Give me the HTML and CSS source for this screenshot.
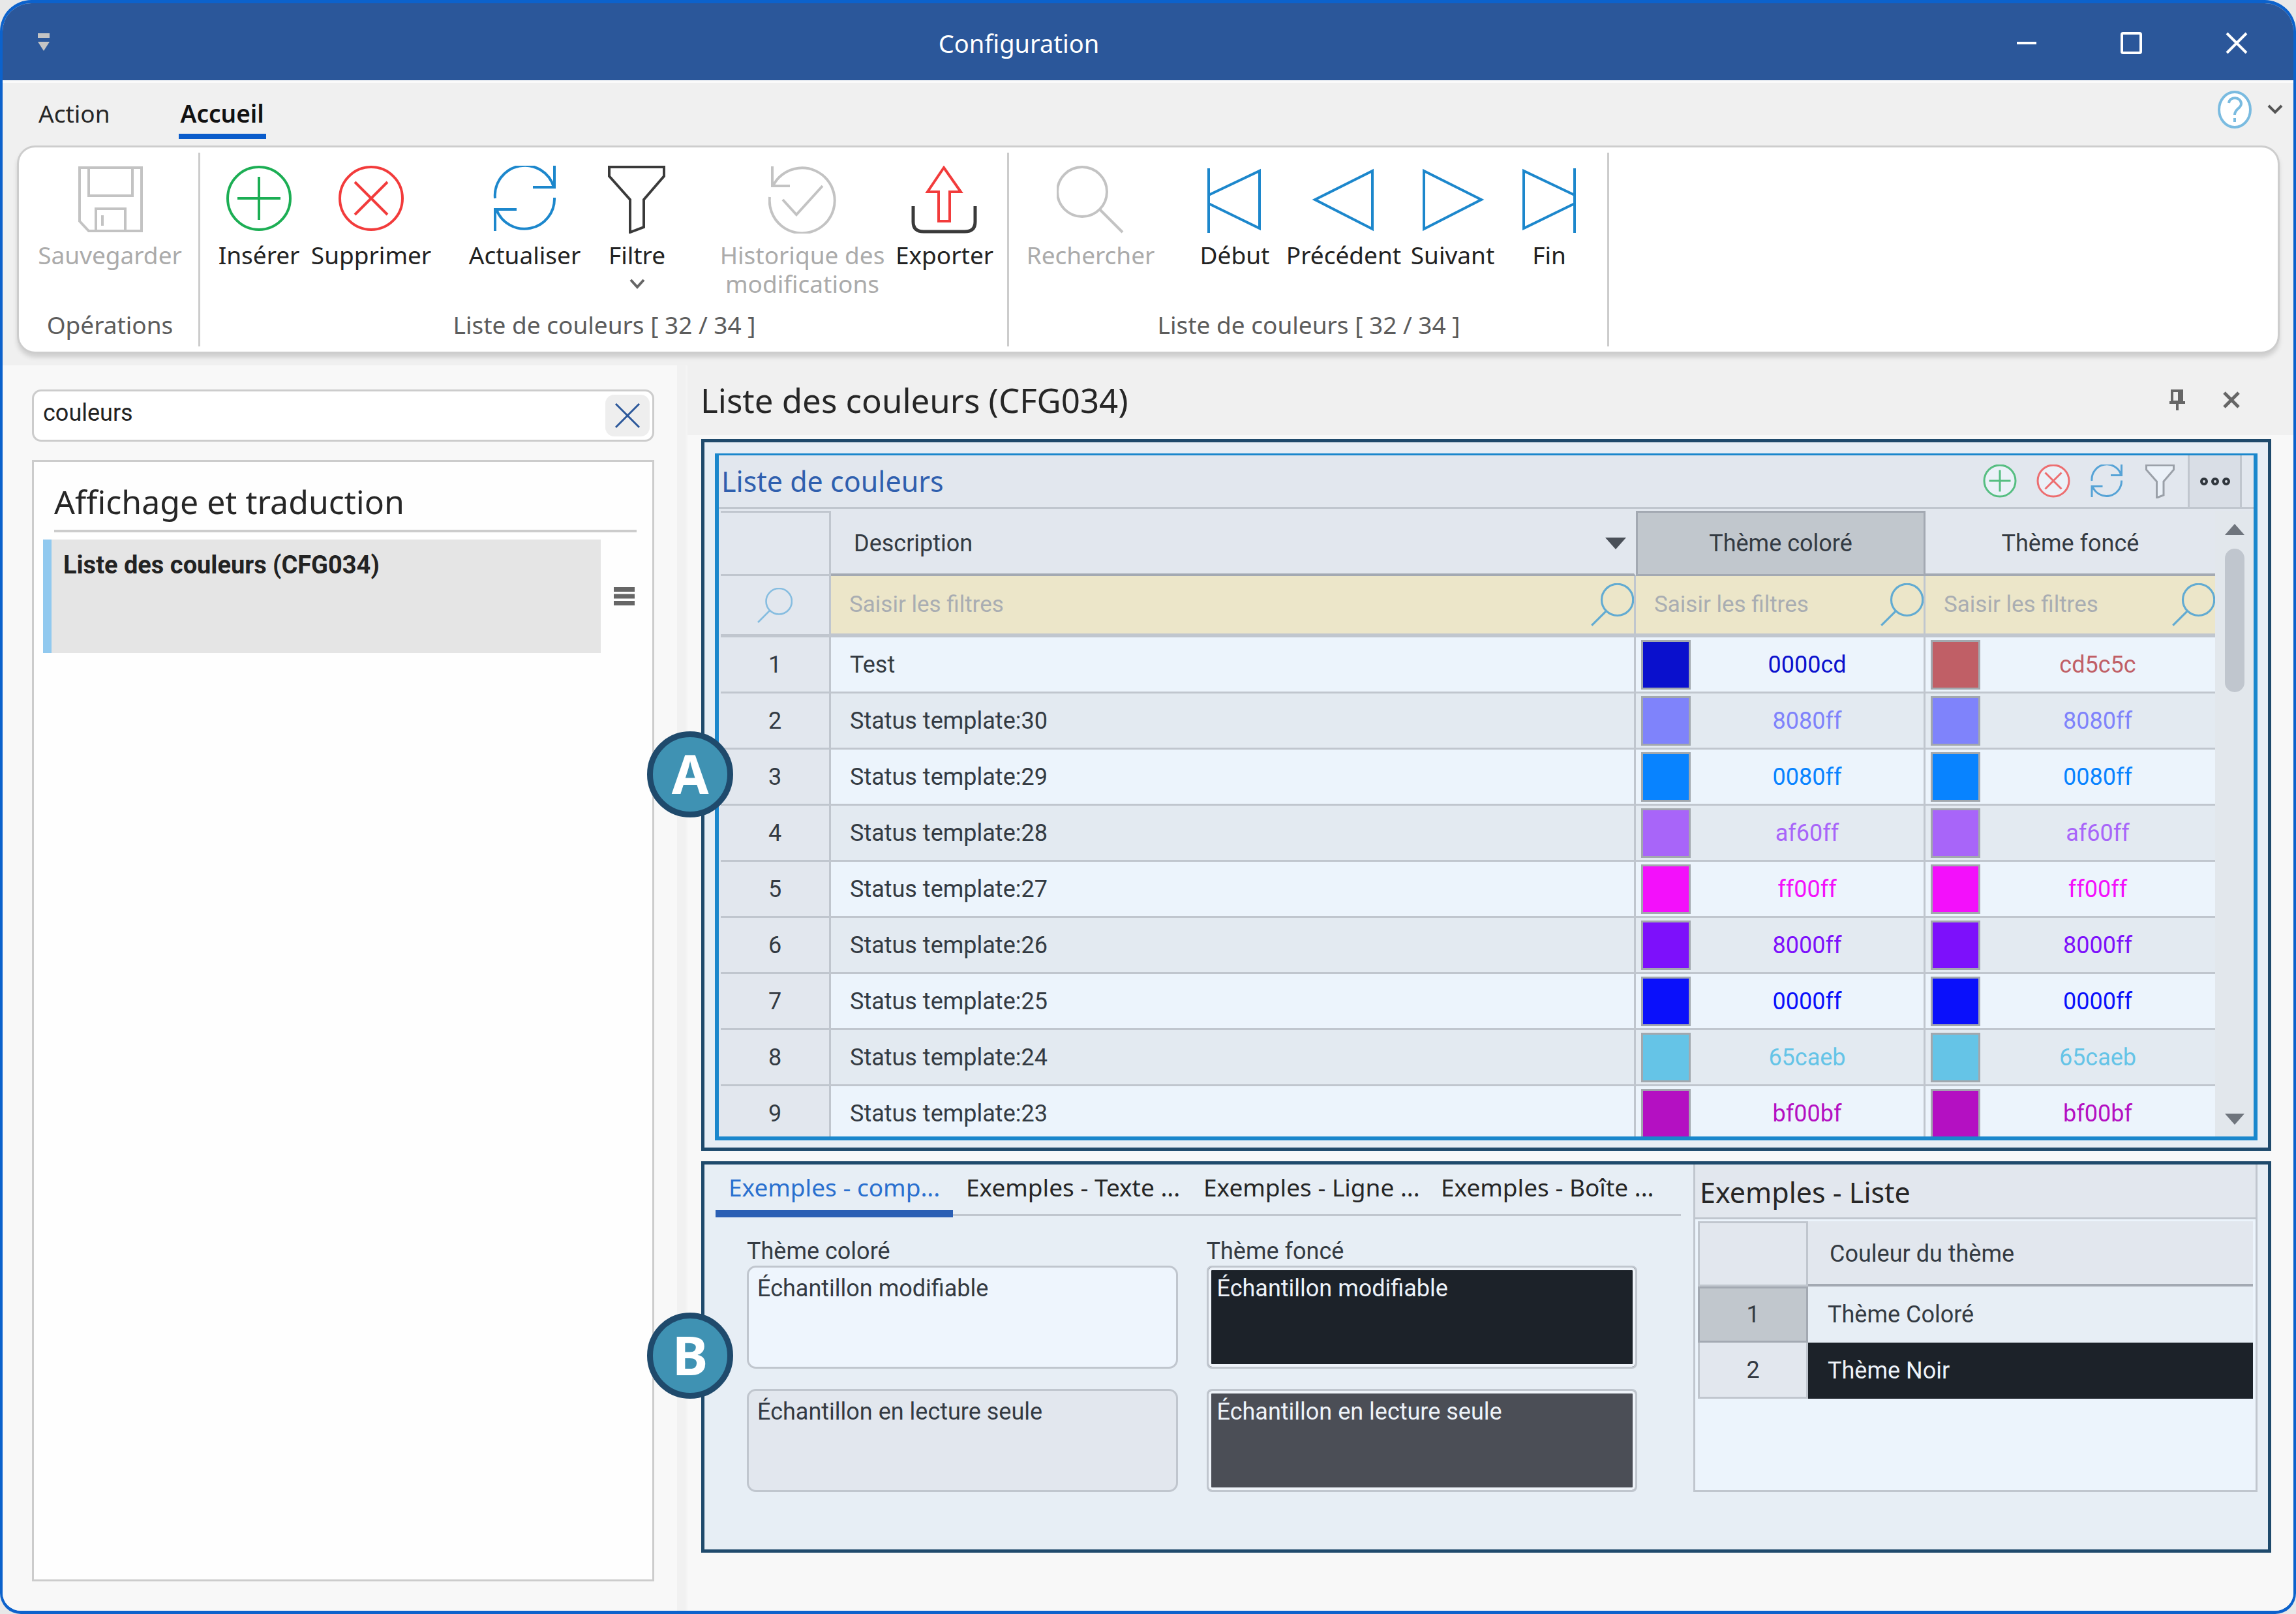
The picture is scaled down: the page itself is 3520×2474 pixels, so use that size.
FILE: index.html
```html
<!DOCTYPE html>
<html lang="fr">
<head>
<meta charset="utf-8">
<title>Configuration</title>
<link rel="stylesheet" href="styles.css">
</head>
<body>
<svg class="sprite" aria-hidden="true">
  <symbol id="save" viewBox="0 0 104 104"><path d="M5 3H100V100H19L5 85Z M19 3V46H86V3 M30 100V66H75V100 M40 76V92"/></symbol>
  <symbol id="plus" viewBox="0 0 104 104"><circle cx="52" cy="50" r="48"/><path d="M19 50H85 M52 17V83"/></symbol>
  <symbol id="cross" viewBox="0 0 104 104"><circle cx="52" cy="50" r="48"/><path d="M27 25L77 75 M77 25L27 75"/></symbol>
  <symbol id="refresh" viewBox="0 0 104 104"><path fill="none" d="M6 50A46 46 0 0 1 96 33 M97 0V33H64 M97 49A46 46 0 0 1 8 67 M6 100V67H39"/></symbol>
  <symbol id="filter" viewBox="0 0 104 104"><path d="M9 2H93V16L62 52V94L41 102V52L9 16Z"/></symbol>
  <symbol id="history" viewBox="0 0 104 104"><path d="M2 48A50 50 0 1 0 7 31 M6 1V31H33 M22 52L43 75L83 31"/></symbol>
  <symbol id="search" viewBox="0 0 104 104"><circle cx="39" cy="40" r="38"/><path d="M66 67L101 102"/></symbol>
  <symbol id="search-left" viewBox="0 0 104 104"><circle cx="64" cy="40" r="38"/><path d="M37 67L2 102"/></symbol>
  <symbol id="first" viewBox="0 0 104 104"><path d="M12 4V103 M12 45L90 8V96L12 58"/></symbol>
  <symbol id="prev" viewBox="0 0 104 104"><path d="M8 52L96 8V97Z"/></symbol>
  <symbol id="next" viewBox="0 0 104 104"><path d="M96 52L8 8V97Z"/></symbol>
  <symbol id="last" viewBox="0 0 104 104"><path d="M91 4V103 M91 45L13 8V96L91 58"/></symbol>
</svg>

<div class="window">
  <header class="titlebar">
    <button class="quick" aria-label="Barre d’accès rapide"><svg width="18" height="27" viewBox="0 0 18 27"><path d="M0 0H18V7H0Z M0 13H18L9 27Z"/></svg></button>
    <h1 class="title">Configuration</h1>
    <button class="winbtn" aria-label="Réduire"><svg width="34" height="34" viewBox="0 0 34 34"><path d="M2 17H32"/></svg></button>
    <button class="winbtn" aria-label="Agrandir"><svg width="34" height="34" viewBox="0 0 34 34"><rect x="2" y="2" width="29" height="30" rx="2"/></svg></button>
    <button class="winbtn" aria-label="Fermer"><svg width="34" height="34" viewBox="0 0 34 34"><path d="M2 2L32 32M32 2L2 32"/></svg></button>
  </header>

  <nav class="menu">
    <button class="menu-item">Action</button>
    <button class="menu-item active">Accueil</button>
    <div class="menu-right">
      <button class="help" aria-label="Aide"><svg width="52" height="58" viewBox="0 0 52 58"><ellipse cx="26" cy="29" rx="24" ry="27"/><path d="M17 19C18 8 36 9 36 20C36 27 26 28 26 37M26 42V48"/></svg></button>
      <button class="collapse" aria-label="Réduire le ruban"><svg width="24" height="16" viewBox="0 0 24 16"><path d="M2 2L12 12L22 2"/></svg></button>
    </div>
  </nav>

  <section class="ribbon">
    <div class="group g-ops">
      <div class="tools"><button class="tool disabled" disabled><svg class="ico"><use href="#save"/></svg>Sauvegarder</button></div>
      <div class="caption">Opérations</div>
    </div>
    <div class="group g-edit">
      <div class="tools">
        <div class="cluster">
          <button class="tool w-ins"><svg class="ico green"><use href="#plus"/></svg>Insérer</button>
          <button class="tool w-sup"><svg class="ico red"><use href="#cross"/></svg>Supprimer</button>
        </div>
        <div class="cluster">
          <button class="tool w-sup"><svg class="ico blue"><use href="#refresh"/></svg>Actualiser</button>
          <button class="tool w-ins"><svg class="ico dark"><use href="#filter"/></svg>Filtre<svg class="drop" viewBox="0 0 24 16"><path d="M2 2L12 13L22 2"/></svg></button>
        </div>
        <div class="cluster">
          <button class="tool w-his disabled" disabled><svg class="ico mid"><use href="#history"/></svg>Historique des<br>modifications</button>
          <button class="tool w-exp"><svg class="ico" viewBox="0 0 104 104"><path class="red" d="M51 3L77 40H60V85H43V40H26Z"/><path class="tray" d="M4 62V86Q4 101 20 101H83Q99 101 99 86V62"/></svg>Exporter</button>
        </div>
      </div>
      <div class="caption">Liste de couleurs [ 32 / 34 ]</div>
    </div>
    <div class="group g-nav">
      <div class="tools">
        <div class="cluster">
          <button class="tool w-rec disabled" disabled><svg class="ico"><use href="#search"/></svg>Rechercher</button>
        </div>
        <div class="cluster">
          <button class="tool w-deb"><svg class="ico blue"><use href="#first"/></svg>Début</button>
          <button class="tool w-pre"><svg class="ico blue"><use href="#prev"/></svg>Précédent</button>
          <button class="tool w-deb"><svg class="ico blue"><use href="#next"/></svg>Suivant</button>
          <button class="tool w-ins"><svg class="ico blue"><use href="#last"/></svg>Fin</button>
        </div>
      </div>
      <div class="caption">Liste de couleurs [ 32 / 34 ]</div>
    </div>
  </section>

  <main class="body">
    <aside class="sidebar">
      <div class="search">
        <input type="text" value="couleurs" aria-label="Rechercher">
        <button class="clear" aria-label="Effacer"><svg width="40" height="40" viewBox="0 0 40 40"><path d="M2 2L38 38M38 2L2 38"/></svg></button>
      </div>
      <div class="results">
        <h2 class="results-title">Affichage et traduction</h2>
        <div class="result">
          <a class="result-link" href="#liste">Liste des couleurs (CFG034)</a>
          <button class="handle" aria-label="Options"><svg width="32" height="28" viewBox="0 0 32 28"><path d="M0 0H32V7H0Z M0 10.500H32V17.500H0Z M0 21H32V28H0Z"/></svg></button>
        </div>
      </div>
    </aside>
    <div class="splitter"></div>
    <section class="content" id="liste">
      <header class="content-head">
        <h2 class="content-title">Liste des couleurs (CFG034)</h2>
        <button class="pin" aria-label="Épingler"><svg width="26" height="32" viewBox="0 0 26 32"><path d="M5 2H20V19H5Z M16 2V19 M1 20H25 M13 20V32"/></svg></button>
        <button class="pin" aria-label="Fermer l’onglet"><svg width="26" height="26" viewBox="0 0 26 26"><path class="thick" d="M2 2L24 24M24 2L2 24"/></svg></button>
      </header>

      <div class="panels">
        <section class="frame frame-main">
          <span class="badge badge-a">A</span>
          <div class="grid">
            <div class="grid-head">
              <h3 class="grid-title">Liste de couleurs</h3>
              <button class="mini" aria-label="Insérer"><svg class="green"><use href="#plus"/></svg></button>
              <button class="mini" aria-label="Supprimer"><svg class="red"><use href="#cross"/></svg></button>
              <button class="mini" aria-label="Actualiser"><svg class="blue"><use href="#refresh"/></svg></button>
              <button class="mini" aria-label="Filtre"><svg class="gray"><use href="#filter"/></svg></button>
              <button class="more" aria-label="Plus"><svg width="48" height="14" viewBox="0 0 48 14"><circle cx="7" cy="7" r="4"/><circle cx="24" cy="7" r="4"/><circle cx="41" cy="7" r="4"/></svg></button>
            </div>
            <div class="grid-body">
              <div class="table-wrap">
                <table class="table">
                  <colgroup><col class="c-num"><col><col class="c-color"><col class="c-color"></colgroup>
                  <thead>
                    <tr class="heads">
                      <td class="corner"></td>
                      <th scope="col" class="h-desc"><div class="sortable">Description<svg width="32" height="18" viewBox="0 0 32 18"><path d="M0 0H32L16 18Z"/></svg></div></th>
                      <th scope="col" class="selected">Thème coloré</th>
                      <th scope="col">Thème foncé</th>
                    </tr>
                    <tr class="filters">
                      <td class="num"><svg class="find small"><use href="#search-left"/></svg></td>
                      <td><div class="filter"><input type="text" placeholder="Saisir les filtres" aria-label="Filtrer la description"><svg class="find"><use href="#search-left"/></svg></div></td>
                      <td><div class="filter"><input type="text" placeholder="Saisir les filtres" aria-label="Filtrer le thème coloré"><svg class="find"><use href="#search-left"/></svg></div></td>
                      <td><div class="filter"><input type="text" placeholder="Saisir les filtres" aria-label="Filtrer le thème foncé"><svg class="find"><use href="#search-left"/></svg></div></td>
                    </tr>
                  </thead>
                  <tbody>
                    <tr><th scope="row">1</th><td class="desc">Test</td><td><div class="color" style="color:#0a10cd"><i></i><span>0000cd</span></div></td><td><div class="color" style="color:#c05f66"><i></i><span>cd5c5c</span></div></td></tr>
                    <tr><th scope="row">2</th><td class="desc">Status template:30</td><td><div class="color" style="color:#7f83fb"><i></i><span>8080ff</span></div></td><td><div class="color" style="color:#7f83fb"><i></i><span>8080ff</span></div></td></tr>
                    <tr><th scope="row">3</th><td class="desc">Status template:29</td><td><div class="color" style="color:#0883ff"><i></i><span>0080ff</span></div></td><td><div class="color" style="color:#0883ff"><i></i><span>0080ff</span></div></td></tr>
                    <tr><th scope="row">4</th><td class="desc">Status template:28</td><td><div class="color" style="color:#a865f9"><i></i><span>af60ff</span></div></td><td><div class="color" style="color:#a865f9"><i></i><span>af60ff</span></div></td></tr>
                    <tr><th scope="row">5</th><td class="desc">Status template:27</td><td><div class="color" style="color:#f310fb"><i></i><span>ff00ff</span></div></td><td><div class="color" style="color:#f310fb"><i></i><span>ff00ff</span></div></td></tr>
                    <tr><th scope="row">6</th><td class="desc">Status template:26</td><td><div class="color" style="color:#7d10fb"><i></i><span>8000ff</span></div></td><td><div class="color" style="color:#7d10fb"><i></i><span>8000ff</span></div></td></tr>
                    <tr><th scope="row">7</th><td class="desc">Status template:25</td><td><div class="color" style="color:#0a10fb"><i></i><span>0000ff</span></div></td><td><div class="color" style="color:#0a10fb"><i></i><span>0000ff</span></div></td></tr>
                    <tr><th scope="row">8</th><td class="desc">Status template:24</td><td><div class="color" style="color:#65c4e7"><i></i><span>65caeb</span></div></td><td><div class="color" style="color:#65c4e7"><i></i><span>65caeb</span></div></td></tr>
                    <tr><th scope="row">9</th><td class="desc">Status template:23</td><td><div class="color" style="color:#b410c2"><i></i><span>bf00bf</span></div></td><td><div class="color" style="color:#b410c2"><i></i><span>bf00bf</span></div></td></tr>
                  </tbody>
                </table>
              </div>
              <div class="scrollbar">
                <svg width="30" height="17" viewBox="0 0 30 17"><path d="M0 17H30L15 0Z"/></svg>
                <div class="thumb"></div>
                <svg width="30" height="17" viewBox="0 0 30 17"><path d="M0 0H30L15 17Z"/></svg>
              </div>
            </div>
          </div>
        </section>

        <section class="frame frame-samples">
          <span class="badge badge-b">B</span>
          <div class="samples">
            <div class="tabs" role="tablist">
              <button class="tab active" role="tab" aria-selected="true">Exemples - comp...</button>
              <button class="tab" role="tab">Exemples - Texte ...</button>
              <button class="tab" role="tab">Exemples - Ligne ...</button>
              <button class="tab" role="tab">Exemples - Boîte ...</button>
            </div>
            <div class="fields">
              <div class="field">
                <label for="s1">Thème coloré</label>
                <textarea id="s1" class="sample">Échantillon modifiable</textarea>
                <textarea class="sample locked" readonly aria-label="Thème coloré, lecture seule">Échantillon en lecture seule</textarea>
              </div>
              <div class="field">
                <label for="s2">Thème foncé</label>
                <textarea id="s2" class="sample black">Échantillon modifiable</textarea>
                <textarea class="sample slate" readonly aria-label="Thème foncé, lecture seule">Échantillon en lecture seule</textarea>
              </div>
            </div>
          </div>
          <div class="list">
            <h3 class="list-title">Exemples - Liste</h3>
            <table class="table list-table">
              <colgroup><col class="c-num"><col></colgroup>
              <thead><tr class="heads"><td class="corner"></td><th scope="col" class="h-theme">Couleur du thème</th></tr></thead>
              <tbody>
                <tr><th scope="row" class="selected">1</th><td class="theme">Thème Coloré</td></tr>
                <tr><th scope="row">2</th><td class="theme black">Thème Noir</td></tr>
              </tbody>
            </table>
          </div>
        </section>
      </div>
    </section>
  </main>
</div>
</body>
</html>
```
FILE: styles.css
```css
:root {
  --line: #c0c6ce;
  --panel: #e2e7ee;
  --ui: "Noto Sans", "Open Sans", sans-serif;
  --data: Roboto, "Liberation Sans", sans-serif;
}
* { box-sizing: border-box; }
html, body { height: 100%; }
body { margin: 0; background: #e8e8e8; font: 37px/44px var(--ui); color: #262626; }
h1, h2, h3 { margin: 0; font-weight: 400; }
button { margin: 0; padding: 0; border: 0; background: none; font: inherit; color: inherit; }
svg { display: block; fill: none; stroke: currentColor; stroke-width: 4; }
.sprite { position: absolute; width: 0; height: 0; }
.green { color: #1cae54; }
.red { color: #f23b3b; stroke: #f23b3b; }
.blue { color: #1c87cc; }
.dark, .tray { color: #3a3a3a; stroke: #3a3a3a; }
.tray { stroke-width: 5; }
.mid { color: #b0b0b0; }

.window { height: 100%; display: flex; flex-direction: column; border: 4px solid #0c62cc; border-width: 5px 4px; border-radius: 48px 48px 32px 32px; background: #f0f0f0; overflow: hidden; }

.titlebar { display: flex; align-items: center; height: 118px; flex: none; padding-top: 4px; background: #2b579a; color: #fff; }
.quick { width: 94px; padding: 0 0 4px 32px; display: flex; justify-content: center; color: #c4c4c4; }
.quick svg { fill: currentColor; stroke: none; }
.title { flex: 1; text-align: center; font-size: 38px; }
.winbtn { width: 161px; height: 100%; display: grid; place-items: center; }
.winbtn:last-child { margin-right: 7px; }

.menu { display: flex; height: 100px; flex: none; padding-left: 52px; border-top: 4px solid #fafafa; }
.menu-item { margin-top: 20px; height: 66px; padding: 0 3px 4px; border-bottom: 8px solid transparent; }
.menu-item + .menu-item { margin-left: 102px; }
.menu-item.active { font-weight: 600; color: #111; border-bottom-color: #0a5ccb; }
.menu-right { margin-left: auto; display: flex; align-items: center; gap: 24px; padding: 0 16px 14px 0; }
.help { color: #7abbe0; }
.help ellipse { fill: #fff; }
.collapse { color: #555; }

.ribbon { display: flex; flex: none; height: 319px; margin: 0 21px 18px 22px; border: 3px solid #cdcdcd; border-radius: 28px; background: #fff; box-shadow: 0 6px 6px #d0d0d0; }
.group { display: flex; flex-direction: column; justify-content: space-between; margin: 8px 0; padding: 20px 0 11px; border-right: 3px solid #cccccc; }
.g-ops { width: 278px; padding-left: 4px; }
.g-edit { width: 1240px; padding-left: 14px; padding-right: 12px; }
.g-nav { width: 920px; padding-left: 15px; padding-right: 13px; }
.tools, .cluster { display: flex; justify-content: space-between; align-items: flex-start; }
.g-ops .tools { justify-content: center; }
.tool { display: flex; flex-direction: column; align-items: center; color: #222; white-space: nowrap; text-align: center; }
.tool.disabled { color: #ababab; }
.ico { width: 104px; height: 104px; margin-bottom: 11px; }
.disabled .ico { color: #c3c3c3; }
.drop { width: 24px; height: 16px; margin-top: 14px; color: #666; }
.w-ins { width: 152px; }
.w-sup { width: 192px; }
.w-his { width: 268px; }
.w-exp { width: 168px; }
.w-rec { width: 220px; }
.w-deb { width: 144px; }
.w-pre { width: 190px; }
.caption { text-align: center; color: #5c5c5c; }

.body { flex: 1; min-height: 0; display: grid; grid-template-columns: 1034px 16px minmax(0, 1fr); background: #f8f8f8; }
.sidebar { display: flex; flex-direction: column; padding: 37px 35px 45px 45px; }
.search { display: flex; align-items: center; height: 80px; padding-right: 4px; margin-bottom: 28px; border: 3px solid #cccccc; border-radius: 14px; background: #fff; }
.search input { flex: 1; min-width: 0; height: 60px; margin-bottom: 8px; padding: 0 14px; border: 0; background: none; font: 36px/44px var(--data); color: #222; outline: 0; }
.clear { width: 68px; height: 64px; display: grid; place-items: center; border-radius: 14px; background: #eeeeee; color: #2b579a; }
.clear svg { stroke-width: 3; }
.results { flex: 1; border: 3px solid #cccccc; background: #fefefe; }
.results-title { margin: 27px 24px 11px 31px; padding-bottom: 9px; border-bottom: 4px solid #cccccc; font-size: 50px; line-height: 68px; }
.result { display: flex; align-items: stretch; height: 174px; padding-left: 14px; }
.result-link { flex: 1; padding: 17px 18px; background: #e5e5e5; border-left: 13px solid #91c9ef; font: 700 38px/44px var(--data); color: #222; text-decoration: none; }
.handle { width: 72px; margin-right: 7px; display: grid; place-items: center; color: #666; }
.handle svg { fill: currentColor; stroke: none; }
.splitter { background: #f1f1f1; border-right: 3px solid #f4f4f4; }

.content { display: flex; flex-direction: column; min-height: 0; }
.content-head { flex: none; display: flex; align-items: center; height: 107px; padding: 0 82px 2px 20px; background: #f0f0f0; }
.content-title { flex: 1; font-size: 51px; line-height: 68px; }
.pin { width: 26px; margin-left: 57px; display: grid; place-items: center; color: #666; }
.thick { stroke-width: 5; }

.panels { flex: 1; min-height: 0; display: flex; flex-direction: column; gap: 16px; padding: 6px 34px 89px 21px; }
.frame { position: relative; border: 5px solid #1f4a6c; background: #e7eef5; }
.frame-main { flex: 1; min-height: 0; display: flex; padding: 17px 16px 11px 16px; }
.badge { position: absolute; left: -88px; width: 132px; height: 132px; display: grid; place-items: center; padding-bottom: 4px; border: 9px solid #1f4a6c; border-radius: 50%; background: #3f92b3; color: #fff; font-size: 82px; font-weight: 700; }
.badge-a { top: 443px; }
.badge-b { top: 227px; }

.grid { flex: 1; min-width: 0; display: flex; flex-direction: column; border: 6px solid #1a87cc; border-top-width: 3px; background: var(--panel); }
.grid-head { flex: none; display: flex; align-items: center; height: 82px; padding: 0 18px 0 4px; border-bottom: 3px solid var(--line); }
.grid-title { flex: 1; font-size: 43px; color: #2f5fae; }
.mini { width: 52px; height: 52px; margin-right: 30px; opacity: .7; }
.mini svg { width: 52px; height: 52px; fill: #eff6fd; stroke-width: 6; }
.gray { color: #7d838b; }
.more { width: 83px; height: 79px; margin-left: -14px; display: grid; place-items: center; border: solid var(--line); border-width: 0 3px; background: #d9dee6; color: #30363d; }
.grid-body { flex: 1; min-height: 0; display: flex; padding: 3px 0 0 3px; }
.table-wrap { flex: 1; min-width: 0; overflow: hidden; }

.table { width: 100%; table-layout: fixed; border-collapse: separate; border-spacing: 0; font: 36px/44px var(--data); color: #333a42; }
.table th, .table td { height: 86px; padding: 0; font-weight: 400; border: solid var(--line); border-width: 0 3px 3px 0; }
.table tr > :last-child { border-right: 0; }
.c-num { width: 169px; }
.c-color { width: 444px; }
.table tbody tr { background: #ecf4fc; }
.table tbody tr:nth-child(even) { background: #e3eaf1; }
.table tbody th, .table .corner, .table .num { background: var(--panel); }
.table .heads > * { height: 100px; border-top: 3px solid var(--line); }
.table .heads th { border-top-color: var(--panel); border-right-color: var(--panel); border-bottom: 4px solid #a3a9b2; }
.table .heads .selected, .table tbody .selected { background: #c1c7cd; border: 3px solid #a3a9b2; }
.sortable { display: flex; align-items: center; justify-content: space-between; padding: 0 12px 0 35px; }
.sortable svg { fill: #4a5058; stroke: none; }
.table .filters td { height: 94px; border-bottom-width: 6px; background: #ece6c9; }
.table .filters .num { background: var(--panel); border-bottom-width: 5px; }
.filter { display: flex; align-items: center; }
.filter input { flex: 1; min-width: 0; padding: 0 0 0 28px; border: 0; background: none; font: 35px/44px var(--data); outline: 0; }
.filter input::placeholder { color: #a9adb2; opacity: 1; }
.find { width: 66px; height: 66px; flex: none; color: #62abd2; stroke-width: 5; }
.find.small { width: 54px; height: 54px; margin: 0 auto; color: #86bde0; }
.table .desc { padding-left: 29px; }
.color { display: flex; align-items: center; padding-left: 8px; }
.color i { width: 76px; height: 76px; flex: none; border: 3px solid #a2a8ae; background: currentColor; }
.color span { flex: 1; text-align: center; }
.scrollbar { flex: none; width: 59px; display: flex; flex-direction: column; align-items: center; padding: 20px 0 18px; background: #e2e7ec; color: #6f757d; }
.scrollbar svg { flex: none; fill: currentColor; stroke: none; }
.thumb { width: 30px; height: 220px; margin: 21px 0 auto; border-radius: 15px; background: var(--line); }

.frame-samples { flex: none; display: flex; gap: 19px; padding: 0 16px 88px 17px; }
.samples { flex: 1; min-width: 0; }
.tabs { display: flex; align-items: flex-start; background: linear-gradient(var(--line), var(--line)) 0 76px / 100% 3px no-repeat; }
.tab { width: 364px; padding: 0 0 11px 20px; line-height: 70px; text-align: left; white-space: nowrap; }
.tab.active { padding-bottom: 0; border-bottom: 11px solid #2b5fb4; color: #2a70cf; }
.fields { display: grid; grid-template-columns: 1fr 1fr; gap: 44px; padding: 30px 67px 0 48px; font: 36px/44px var(--data); color: #333a42; }
.field { display: flex; flex-direction: column; }
.sample { display: block; width: 100%; height: 158px; margin-bottom: 31px; padding: 10px 13px; border: 3px solid var(--line); border-radius: 14px; background: #eef5fd; font: inherit; color: inherit; resize: none; outline: 0; overflow: hidden; }
.sample:last-child { margin-bottom: 0; }
.locked { background: var(--panel); }
.sample.black, .sample.slate { border-radius: 8px; box-shadow: inset 0 0 0 4px #eef3f9; color: #eef3f9; background: #1c2229; }
.sample.slate { background: #4b4e56; }
.list { width: 865px; align-self: stretch; border: 3px solid var(--line); border-top: 0; background: #ecf4fc; }
.list-title { padding: 5px 7px 0; border-bottom: 3px solid var(--line); background: var(--panel); font-size: 43px; line-height: 76px; }
.list-table { width: auto; min-width: calc(100% - 8px); margin: 3px 4px; }
.list-table .corner, .list-table tbody th { border-left: 3px solid var(--line); }
.table .h-theme { padding-left: 33px; text-align: left; background: var(--panel); }
.table .theme { padding-left: 30px; border-bottom: 0; background: #e7eef5; }
.table .theme.black { background: #1c2229; color: #eef3f9; }
```
